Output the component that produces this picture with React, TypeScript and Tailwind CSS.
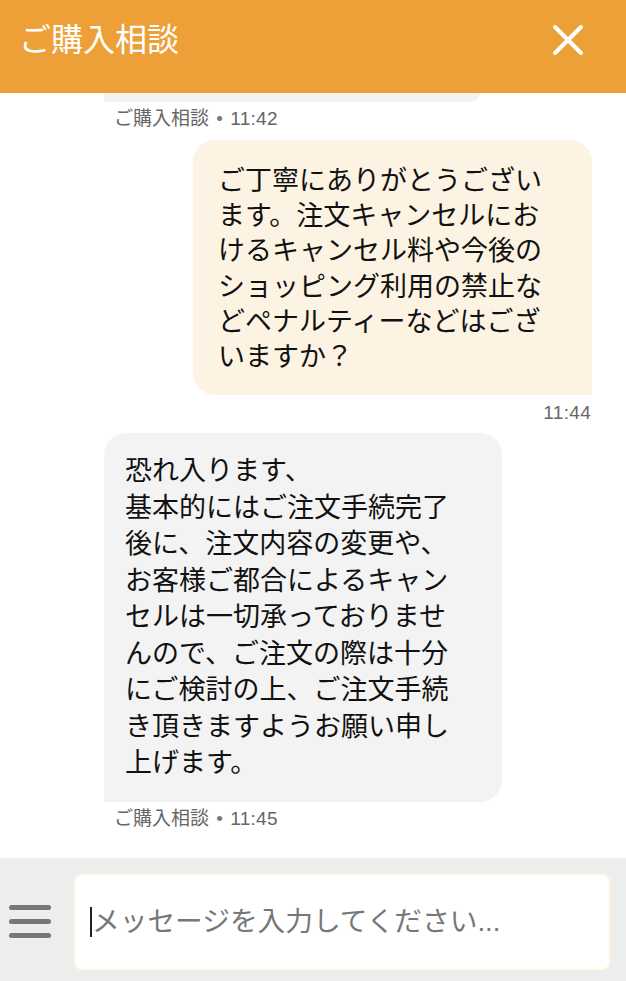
const jp = "font-['Liberation_Sans','Noto_Sans_CJK_JP',sans-serif]"

const userText = `ご丁寧にありがとうござい
ます。注文キャンセルにお
けるキャンセル料や今後の
ショッピング利用の禁止な
どペナルティーなどはござ
いますか？`

const replyText = `恐れ入ります、
基本的にはご注文手続完了
後に、注文内容の変更や、
お客様ご都合によるキャン
セルは一切承っておりませ
んので、ご注文の際は十分
にご検討の上、ご注文手続
き頂きますようお願い申し
上げます。`

function Caption({ time }: { time: string }) {
  return (
    <p className="ml-[114px] mt-[7px] text-[19px] leading-[20px] text-[#666]">
      ご購入相談 <span className="px-[2px] text-[#777]">•</span> <span className="font-medium tracking-[0.3px]">{time}</span>
    </p>
  )
}

function CloseIcon() {
  return (
    <svg width="32" height="32" viewBox="0 0 32 32" fill="none" stroke="white" strokeWidth="4" strokeLinecap="round">
      <path d="M3 3 L29 29 M29 3 L3 29" />
    </svg>
  )
}

export default function App() {
  return (
    <div className={`flex h-[981px] w-[626px] flex-col overflow-hidden bg-white ${jp}`}>
      <header className="flex h-[93px] shrink-0 items-center justify-between bg-[#eea038] pl-[19px] pr-[42px] pb-[13px]">
        <h1 className="text-[32px] leading-none text-white">ご購入相談</h1>
        <CloseIcon />
      </header>

      <main className="flex flex-1 flex-col overflow-hidden">
        <div className="ml-[104px] h-[9px] w-[376px] rounded-br-[20px] bg-[#f3f3f3]" />
        <Caption time="11:42" />

        <div className="ml-auto mr-[34px] mt-[11px] w-[399px] rounded-t-[22px] rounded-bl-[22px] bg-[#fdf3e3] pl-[25px] pr-[20px] pt-[24px] pb-[20px]">
          <p className="whitespace-pre-line text-[27px] leading-[35.2px] text-[#111]">{userText}</p>
        </div>
        <p className="mr-[35px] mt-[8px] text-right text-[19px] font-medium leading-[20px] tracking-[0.3px] text-[#666]">11:44</p>

        <div className="ml-[104px] mt-[10px] w-[398px] rounded-t-[22px] rounded-br-[22px] bg-[#f3f3f3] pl-[21px] pr-[20px] pt-[20px] pb-[20px]">
          <p className="whitespace-pre-line text-[27px] leading-[36.5px] text-[#111]">{replyText}</p>
        </div>
        <Caption time="11:45" />
      </main>

      <footer className="flex h-[123px] shrink-0 items-center gap-[22px] bg-[#ededed] pl-[9px] pr-[15px] pt-[4px]">
        <div className="flex w-[42px] flex-col gap-[9px]">
          <span className="h-[5px] rounded-full bg-[#74777c]" />
          <span className="h-[5px] rounded-full bg-[#74777c]" />
          <span className="h-[5px] rounded-full bg-[#74777c]" />
        </div>
        <div className="flex h-[98px] flex-1 items-center rounded-[9px] border-2 border-[#fdf1dd] bg-white pl-[15px]">
          <span className="h-[30px] w-[2px] bg-[#222]" />
          <span className="text-[27.7px] text-[#777]">メッセージを入力してください...</span>
        </div>
      </footer>
    </div>
  )
}
